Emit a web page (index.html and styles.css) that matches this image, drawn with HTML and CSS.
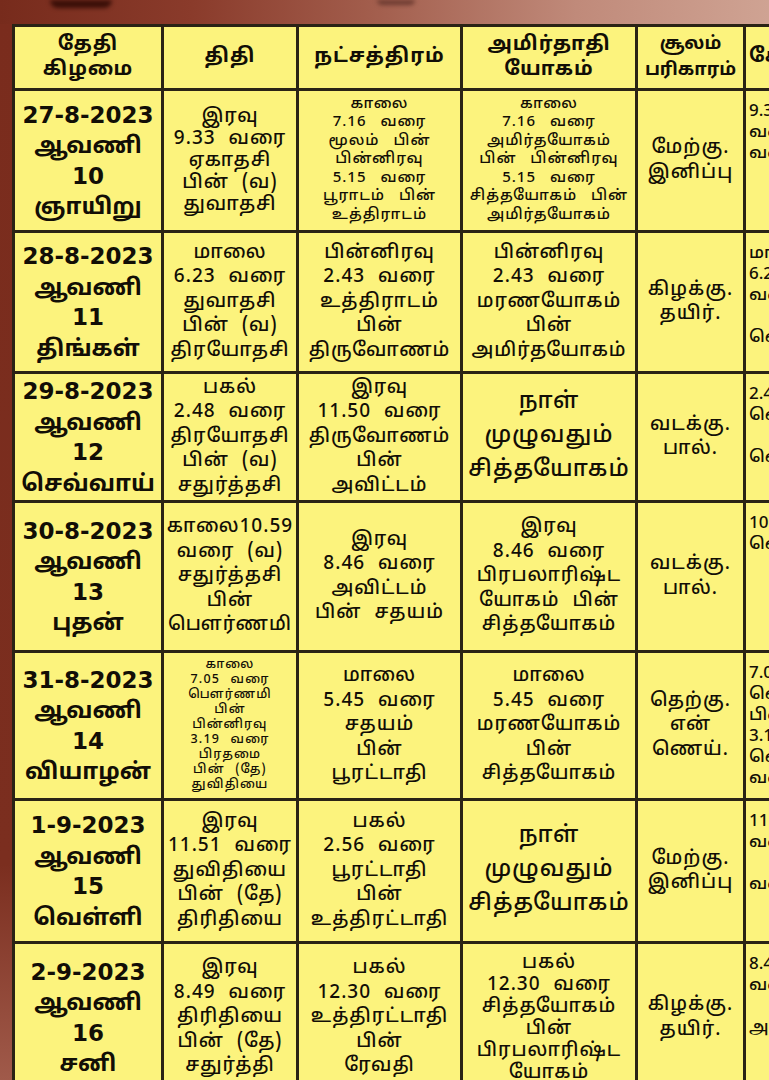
FILE: index.html
```html
<!DOCTYPE html>
<html lang="ta">
<head>
<meta charset="utf-8">
<link rel="stylesheet" href="styles.css">
</head>
<body>
<div class="frame">
  <div class="topbar"><span class="blob blob-a"></span><span class="blob blob-b"></span></div>
  <table class="cal">
    <colgroup>
      <col class="c1"><col class="c2"><col class="c3"><col class="c4"><col class="c5"><col class="c6">
    </colgroup>
    <thead>
      <tr class="hdr">
        <th>தேதி<br>கிழமை</th>
        <th>திதி</th>
        <th>நட்சத்திரம்</th>
        <th>அமிர்தாதி<br>யோகம்</th>
        <th class="narrow">சூலம்<br>பரிகாரம்</th>
        <th class="edge">சேர்க்கை</th>
      </tr>
    </thead>
    <tbody>
      <tr class="r1">
        <td class="date">27-8-2023<br>ஆவணி<br>10<br>ஞாயிறு</td>
        <td class="tight">இரவு<br>9.33 வரை<br>ஏகாதசி<br>பின் (வ)<br>துவாதசி</td>
        <td class="sm">காலை<br>7.16 வரை<br>மூலம் பின்<br>பின்னிரவு<br>5.15 வரை<br>பூராடம் பின்<br>உத்திராடம்</td>
        <td class="sm">காலை<br>7.16 வரை<br>அமிர்தயோகம்<br>பின் பின்னிரவு<br>5.15 வரை<br>சித்தயோகம் பின்<br>அமிர்தயோகம்</td>
        <td>மேற்கு.<br>இனிப்பு</td>
        <td class="edge">9.33<br>வரை<br>வரை</td>
      </tr>
      <tr class="r2">
        <td class="date">28-8-2023<br>ஆவணி<br>11<br>திங்கள்</td>
        <td>மாலை<br>6.23 வரை<br>துவாதசி<br>பின் (வ)<br>திரயோதசி</td>
        <td>பின்னிரவு<br>2.43 வரை<br>உத்திராடம்<br>பின்<br>திருவோணம்</td>
        <td>பின்னிரவு<br>2.43 வரை<br>மரணயோகம்<br>பின்<br>அமிர்தயோகம்</td>
        <td>கிழக்கு.<br>தயிர்.</td>
        <td class="edge">மாலை<br>6.23<br>வரை<br><br>வெளி</td>
      </tr>
      <tr class="r3">
        <td class="date">29-8-2023<br>ஆவணி<br>12<br>செவ்வாய்</td>
        <td>பகல்<br>2.48 வரை<br>திரயோதசி<br>பின் (வ)<br>சதுர்த்தசி</td>
        <td>இரவு<br>11.50 வரை<br>திருவோணம்<br>பின்<br>அவிட்டம்</td>
        <td class="lg">நாள்<br>முழுவதும்<br>சித்தயோகம்</td>
        <td>வடக்கு.<br>பால்.</td>
        <td class="edge">2.48<br>வெளி<br><br>வெளி</td>
      </tr>
      <tr class="r4">
        <td class="date">30-8-2023<br>ஆவணி<br>13<br>புதன்</td>
        <td>காலை10.59<br>வரை (வ)<br>சதுர்த்தசி<br>பின்<br>பௌர்ணமி</td>
        <td>இரவு<br>8.46 வரை<br>அவிட்டம்<br>பின் சதயம்</td>
        <td>இரவு<br>8.46 வரை<br>பிரபலாரிஷ்ட<br>யோகம் பின்<br>சித்தயோகம்</td>
        <td>வடக்கு.<br>பால்.</td>
        <td class="edge">10.59<br>வெளி<br><br><br></td>
      </tr>
      <tr class="r5">
        <td class="date">31-8-2023<br>ஆவணி<br>14<br>வியாழன்</td>
        <td class="xs">காலை<br>7.05 வரை<br>பௌர்ணமி<br>பின்<br>பின்னிரவு<br>3.19 வரை<br>பிரதமை<br>பின் (தே)<br>துவிதியை</td>
        <td>மாலை<br>5.45 வரை<br>சதயம்<br>பின்<br>பூரட்டாதி</td>
        <td>மாலை<br>5.45 வரை<br>மரணயோகம்<br>பின்<br>சித்தயோகம்</td>
        <td>தெற்கு.<br>என்<br>ணெய்.</td>
        <td class="edge">7.05<br>வெளி<br>பின்<br>3.19<br>வெளி<br>வரை</td>
      </tr>
      <tr class="r6">
        <td class="date">1-9-2023<br>ஆவணி<br>15<br>வெள்ளி</td>
        <td>இரவு<br>11.51 வரை<br>துவிதியை<br>பின் (தே)<br>திரிதியை</td>
        <td>பகல்<br>2.56 வரை<br>பூரட்டாதி<br>பின்<br>உத்திரட்டாதி</td>
        <td class="lg">நாள்<br>முழுவதும்<br>சித்தயோகம்</td>
        <td>மேற்கு.<br>இனிப்பு</td>
        <td class="edge">11.51<br>வரை<br><br>வரை</td>
      </tr>
      <tr class="r7">
        <td class="date">2-9-2023<br>ஆவணி<br>16<br>சனி</td>
        <td>இரவு<br>8.49 வரை<br>திரிதியை<br>பின் (தே)<br>சதுர்த்தி</td>
        <td>பகல்<br>12.30 வரை<br>உத்திரட்டாதி<br>பின்<br>ரேவதி</td>
        <td class="mid">பகல்<br>12.30 வரை<br>சித்தயோகம்<br>பின்<br>பிரபலாரிஷ்ட<br>யோகம்</td>
        <td>கிழக்கு.<br>தயிர்.</td>
        <td class="edge">8.49<br>வரை<br><br>அவை</td>
      </tr>
    </tbody>
  </table>
</div>
</body>
</html>
```

FILE: styles.css
```css
html, body {
  margin: 0;
  padding: 0;
}
body {
  width: 769px;
  height: 1080px;
  overflow: hidden;
  background: linear-gradient(180deg, #7a2c1d 0%, #7b2e1f 80%, #a05a4a 100%);
  font-family: "Noto Sans Tamil", "Lohit Tamil", "DejaVu Sans", "Noto Sans", sans-serif;
  color: #120e06;
}
.frame {
  padding-left: 12px;
}
.topbar {
  height: 24px;
  margin-left: -12px;
  background: linear-gradient(90deg, #772b1c 0%, #8a3b2b 25%, #a4604f 50%, #c08a7a 75%, #cfa393 100%);
  display: flex;
  align-items: flex-start;
}
.blob {
  display: block;
  background: #3a0f08;
  border-radius: 0 0 10px 10px;
  filter: blur(2px);
}
.blob-a {
  width: 62px;
  height: 8px;
  margin-left: 50px;
}
.blob-b {
  width: 38px;
  height: 5px;
  margin-left: 265px;
  background: #6b3a30;
}
.cal {
  border-collapse: collapse;
  table-layout: fixed;
  width: 877px;
  background: #fcf37d;
  border: 3px solid #2a2315;
}
.c1 { width: 149px; }
.c2 { width: 135px; }
.c3 { width: 164px; }
.c4 { width: 175px; }
.c5 { width: 108px; }
.c6 { width: 146px; }
.cal th, .cal td {
  border: 3px solid #2a2315;
  text-align: center;
  vertical-align: middle;
  padding: 0;
  overflow: hidden;
  white-space: nowrap;
}
.cal th {
  font-size: 20px;
  font-weight: 700;
  line-height: 25px;
  letter-spacing: 1px;
}
.cal th.narrow {
  font-size: 18px;
  letter-spacing: 0;
  line-height: 26px;
}
.hdr { height: 64px; }
.r1 { height: 142px; }
.r2 { height: 141px; }
.r3 { height: 129px; }
.r4 { height: 150px; }
.r5 { height: 148px; }
.r6 { height: 143px; }
.r7 { height: 150px; }
.cal td {
  font-size: 19px;
  font-weight: 500;
  line-height: 24.5px;
  letter-spacing: 1px;
  word-spacing: 7px;
}
.cal td.tight {
  line-height: 22px;
}
.cal td.date {
  font-family: "DejaVu Sans", "Noto Sans Tamil", sans-serif;
  font-weight: 700;
  font-size: 23px;
  line-height: 30.5px;
  letter-spacing: 0;
  word-spacing: 0;
}
.cal td.sm {
  font-size: 15px;
  line-height: 18.5px;
  letter-spacing: 1px;
  word-spacing: 9px;
}
.cal td.xs {
  font-size: 12.5px;
  line-height: 15px;
  letter-spacing: 1.2px;
  word-spacing: 6px;
}
.cal td.lg {
  font-size: 23px;
  line-height: 34px;
  letter-spacing: 1px;
}
.cal td.mid {
  line-height: 22px;
}
.cal .edge {
  text-align: left;
  vertical-align: top;
  padding-top: 10px;
  padding-left: 3px;
  font-size: 17px;
  line-height: 21px;
  letter-spacing: 0;
}
.cal th.edge {
  vertical-align: middle;
  padding-top: 0;
  font-size: 20px;
}
```
